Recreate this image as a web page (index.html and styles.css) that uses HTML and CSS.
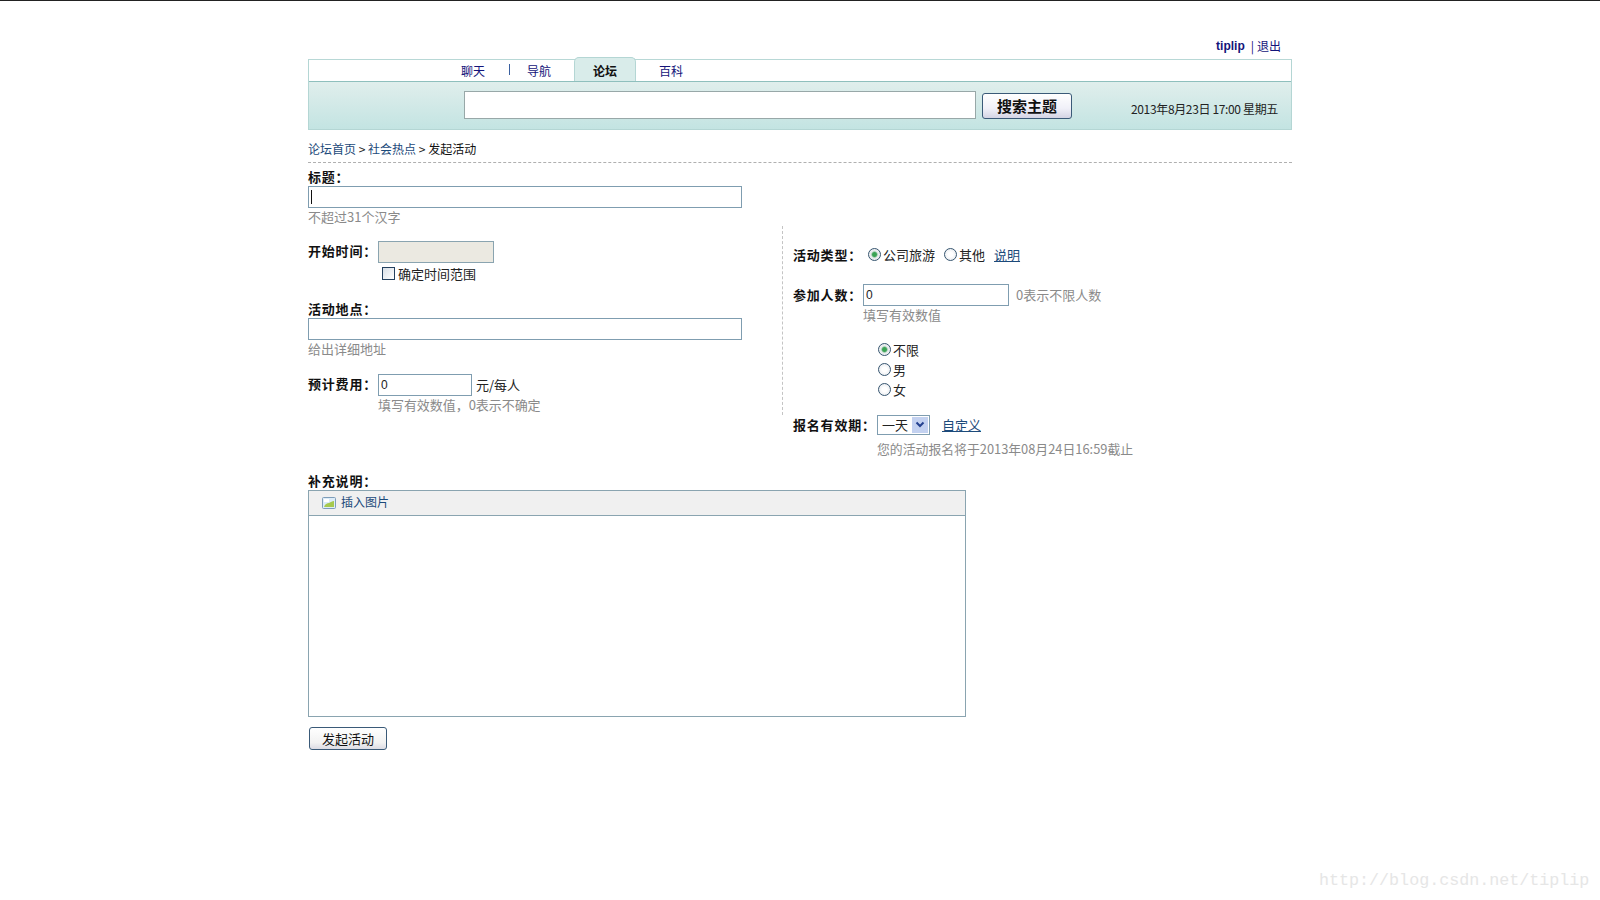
FILE: index.html
```html
<!DOCTYPE html>
<html lang="zh">
<head>
<meta charset="utf-8">
<title>发起活动</title>
<link rel="stylesheet" href="styles.css">
</head>
<body>
<div class="page">
  <div class="userbar"><a class="user" href="#">tiplip</a><span class="pipe">|</span><a class="logout" href="#">退出</a></div>
  <header class="head">
    <nav class="tabs">
      <a class="tab t1" href="#">聊天</a>
      <span class="tabsep"></span>
      <a class="tab t2" href="#">导航</a>
      <a class="tab active" href="#">论坛</a>
      <a class="tab t4" href="#">百科</a>
    </nav>
    <div class="searchband">
      <input class="searchinput" type="text">
      <button class="searchbtn" type="button">搜索主题</button>
      <span class="date">2013年8月23日 17:00 星期五</span>
    </div>
  </header>
  <div class="crumbs"><a href="#">论坛首页</a> &gt; <a href="#">社会热点</a> &gt; <span class="cur">发起活动</span></div>
  <section class="titleblock">
    <div class="lbl">标题：</div>
    <input class="field wide caret" type="text">
    <div class="hint">不超过31个汉字</div>
  </section>
  <div class="cols">
    <div class="left">
      <div class="row start">
        <span class="lbl rowlbl">开始时间：</span>
        <input class="field time" type="text" disabled>
      </div>
      <label class="rangecheck"><input class="check" type="checkbox">确定时间范围</label>
      <div class="lbl place">活动地点：</div>
      <input class="field wide" type="text">
      <div class="hint">给出详细地址</div>
      <div class="row cost">
        <span class="lbl rowlbl">预计费用：</span>
        <input class="field money" type="text" value="0">
        <span class="unit">元/每人</span>
      </div>
      <div class="hint indent">填写有效数值，0表示不确定</div>
    </div>
    <div class="right">
      <div class="row type">
        <span class="lbl typelbl">活动类型：</span>
        <label class="opt"><input class="radio" type="radio" name="t" checked>公司旅游</label>
        <label class="opt other"><input class="radio" type="radio" name="t">其他</label>
        <a class="ul explain" href="#">说明</a>
      </div>
      <div class="row people">
        <span class="lbl peoplelbl">参加人数：</span>
        <input class="field count" type="text" value="0">
        <span class="hint side">0表示不限人数</span>
      </div>
      <div class="hint indent2">填写有效数值</div>
      <div class="gender">
        <label class="opt"><input class="radio" type="radio" name="g" checked>不限</label>
        <label class="opt"><input class="radio" type="radio" name="g">男</label>
        <label class="opt"><input class="radio" type="radio" name="g">女</label>
      </div>
    </div>
  </div>
  <div class="deadline">
    <div class="row">
      <span class="lbl deadlbl">报名有效期：</span>
      <span class="selectbox"><select class="sel"><option>一天</option></select><span class="arrow"><svg width="10" height="8" viewBox="0 0 10 8"><path d="M1.500 1.500 5 5l3.500-3.500" fill="none" stroke="#24408f" stroke-width="2"/></svg></span></span>
      <a class="ul custom" href="#">自定义</a>
    </div>
    <div class="hint indent3">您的活动报名将于2013年08月24日16:59截止</div>
  </div>
  <div class="lbl extra">补充说明：</div>
  <div class="editor">
    <div class="toolbar">
      <svg class="picicon" width="14" height="12" viewBox="0 0 14 12"><rect x=".5" y=".5" width="13" height="11" rx="1" fill="#dcecf8" stroke="#7e9db9"/><path d="M2 10c1-3 3-4 5-4 2-1 3-2 5-2v6z" fill="#a6c94e"/><rect x="2" y="2" width="5" height="3" fill="#fff"/></svg>
      <a class="insert" href="#">插入图片</a>
    </div>
    <div class="editarea"></div>
  </div>
  <button class="submit" type="button">发起活动</button>
</div>
<div class="watermark">http://blog.csdn.net/tiplip</div>
</body>
</html>
```
FILE: styles.css
```css
html, body { margin: 0; padding: 0; height: 900px; overflow: hidden; }
body {
  position: relative;
  background: #fff;
  border-top: 1px solid #222;
  box-sizing: border-box;
  font: 13px/18px "Noto Sans CJK SC", "Liberation Sans", sans-serif;
  color: #222;
}
a { color: #1c4a7a; text-decoration: none; }
.page { width: 984px; margin: 0 0 0 308px; }

.userbar { height: 58px; padding: 36px 11px 0 0; box-sizing: border-box; display: flex; justify-content: flex-end; line-height: 18px; font-size: 13px; }
.user { color: #14147a; font: 700 12px/18px "Liberation Sans", sans-serif; }
.pipe { margin: 0 3px 0 6px; color: #14147a; font-size: 12px; }
.logout { color: #14147a; font-size: 12px; }

.head { border: 1px solid #b4d6d4; border-top-color: #b8d8d6; }
.tabs { height: 21px; display: flex; align-items: center; position: relative; background: #fff; }
.tab { color: #14147a; font-size: 12px; line-height: 18px; }
.t1 { margin-left: 152px; }
.tabsep { width: 1px; height: 11px; background: #3a60a0; margin: 0 17px 0 24px; position: relative; top: -1px; }
.t2 { margin-right: 23px; }
.active {
  width: 62px; height: 25px; margin-top: -2px; margin-right: 23px; box-sizing: border-box;
  background: #d9ecea; border: 1px solid #b4d6d4; border-bottom: 0; border-radius: 5px 5px 0 0;
  text-align: center; font-weight: 700; color: #111; line-height: 26px; position: relative;
}
.searchband {
  height: 48px; border-top: 1px solid #8fbfbd; box-sizing: border-box;
  background: linear-gradient(#e0eeec, #c3e4e2);
  display: flex; align-items: flex-start; position: relative;
}
.searchinput { width: 512px; height: 28px; margin: 9px 0 0 155px; box-sizing: border-box; border: 1px solid #98a8a8; background: #fff; padding: 0; }
.searchbtn {
  width: 90px; height: 26px; margin: 11px 0 0 6px; padding: 0; box-sizing: border-box;
  border: 1px solid #3a5a78; border-radius: 3px;
  background: linear-gradient(#fff, #f0f0f8 60%, #d4d4e4);
  font: 700 15px/24px "Noto Sans CJK SC", sans-serif; color: #111;
}
.date { margin: 18px 0 0 59px; font-size: 12px; line-height: 18px; color: #222; letter-spacing: -.35px; }

.crumbs { height: 33px; padding-top: 10px; box-sizing: border-box; border-bottom: 1px dashed #b0b0b0; font-size: 12px; line-height: 18px; color: #222; }
.crumbs a { color: #1c4a7a; }
.cur { color: #111; }

.lbl { font-weight: 700; color: #111; font-size: 13px; letter-spacing: .8px; line-height: 18px; }
.hint { color: #8a8a8a; font-size: 13px; line-height: 18px; }
.field { border: 1px solid #7f9db0; height: 22px; box-sizing: border-box; background: #fff; padding: 0 2px; font: 12px/20px "Liberation Sans", sans-serif; color: #222; outline: 0; display: block; }
.wide { width: 434px; }
.caret { background: linear-gradient(#111, #111) 2px 3px / 1px 14px no-repeat #fff; }
.row { display: flex; align-items: center; }

.titleblock { padding-top: 5px; height: 63px; box-sizing: border-box; }
.titleblock .lbl { height: 18px; }

.cols { display: flex; }
.left { width: 474px; height: 174px; border-right: 1px dashed #c4c4c4; padding-top: 15px; flex: none; }
.rowlbl { width: 70px; flex: none; padding-bottom: 2px; }
.time { width: 116px; background: #ebe9e1; border-color: #8aa4b0; }
.rangecheck { display: flex; align-items: center; margin: 2px 0 0 74px; height: 18px; }
.check { appearance: none; width: 13px; height: 13px; margin: 0 3px 0 0; box-sizing: border-box; border: 1px solid #24405e; background: linear-gradient(135deg, #d8dfe6, #fff); position: relative; top: -1px; }
.place { margin-top: 17px; height: 18px; }
.left .hint { height: 18px; }
.cost { margin-top: 16px; }
.money { width: 94px; }
.unit { margin-left: 4px; }
.indent { margin-left: 70px; letter-spacing: -.05px; }

.right { padding: 19px 0 0 10px; flex: 1; }
.typelbl { width: 75px; flex: none; }
.peoplelbl { width: 70px; flex: none; }
.opt { display: flex; align-items: center; height: 20px; color: #222; }
.radio {
  appearance: none; width: 13px; height: 13px; margin: 0 2px 0 0; box-sizing: border-box;
  border: 1px solid #36556f; border-radius: 50%; background: radial-gradient(circle, #fff 30%, #dfe3e8);
  position: relative; top: -1px;
}
.radio:checked { background: radial-gradient(circle, #3aa354 0 25%, #e4e8ea 45%, #fff); }
.other { margin-left: 9px; }
.explain { margin-left: 9px; }
.ul { text-decoration: underline; }
.people { margin-top: 19px; }
.count { width: 146px; }
.side { margin-left: 7px; }
.indent2 { margin-left: 70px; height: 18px; }
.gender { margin: 16px 0 0 85px; }

.deadline { margin: 0 0 0 485px; }
.deadlbl { width: 84px; flex: none; }
.selectbox { width: 53px; height: 20px; box-sizing: border-box; border: 1px solid #7f9db0; display: flex; align-items: center; position: relative; background: #fff; }
.sel { appearance: none; border: 0; background: transparent; padding: 0 0 0 4px; width: 100%; font: 13px/18px "Noto Sans CJK SC", sans-serif; color: #222; outline: 0; }
.arrow { position: absolute; right: 1px; top: 1px; width: 16px; height: 16px; background: #c3d1f0; display: flex; align-items: center; justify-content: center; }
.custom { margin-left: 12px; }
.indent3 { margin: 5px 0 0 84px; font-size: 12.85px; }

.extra { margin-top: 14px; height: 18px; }
.editor { width: 658px; height: 227px; box-sizing: border-box; border: 1px solid #8aa4b0; }
.toolbar { height: 25px; background: #f0f0f0; border-bottom: 1px solid #8aa4b0; box-sizing: border-box; display: flex; align-items: center; padding-left: 13px; }
.picicon { margin-right: 5px; }
.insert { font-size: 12px; line-height: 16px; color: #1c4a7a; padding-bottom: 2px; }
.editarea { height: 200px; }
.submit {
  display: block; width: 78px; height: 23px; margin: 10px 0 0 1px; padding: 0; box-sizing: border-box;
  border: 1px solid #3a5a78; border-radius: 3px; background: linear-gradient(#fff, #f2f2f2 70%, #dcdce4);
  font: 13px/20px "Noto Sans CJK SC", sans-serif; color: #111;
}
.watermark { position: absolute; left: 1319px; top: 870px; font: 16.7px/20px "Liberation Mono", monospace; color: #e6e6e6; white-space: nowrap; }
```
